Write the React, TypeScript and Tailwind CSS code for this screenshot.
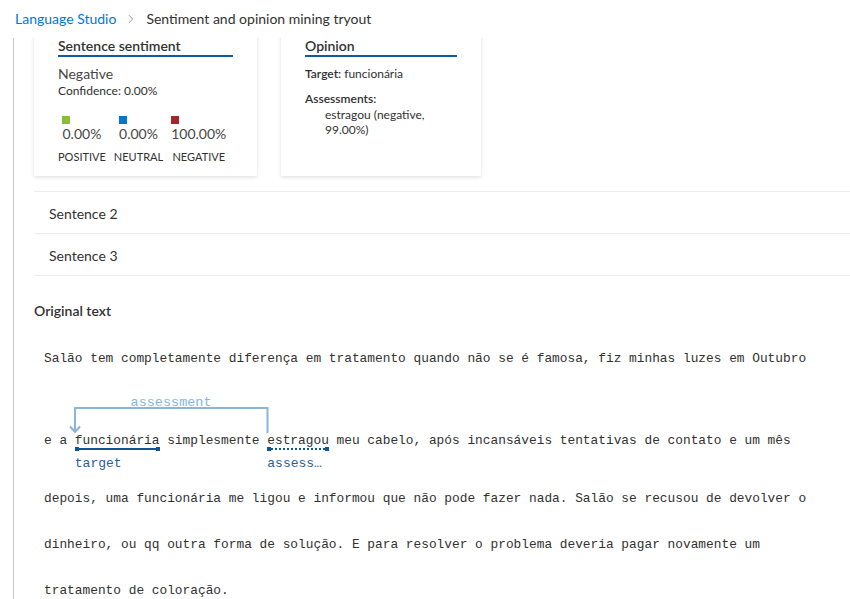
import { ChevronRight } from 'lucide-react';

const ui = "font-['Lato','Noto_Sans',sans-serif]";
const mono = "font-['Liberation_Mono','DejaVu_Sans_Mono',monospace]";

const scores = [
  { color: 'bg-[#8cbd3a]', value: '0.00%', label: 'POSITIVE' },
  { color: 'bg-[#0078d4]', value: '0.00%', label: 'NEUTRAL' },
  { color: 'bg-[#a4262c]', value: '100.00%', label: 'NEGATIVE' },
];

const lines = [
  'depois, uma funcionária me ligou e informou que não pode fazer nada. Salão se recusou de devolver o',
  'dinheiro, ou qq outra forma de solução. E para resolver o problema deveria pagar novamente um',
  'tratamento de coloração.',
];

function CardTitle({ children }: { children: string }) {
  return (
    <div className="border-b-2 border-[#0f5b9e] text-sm font-semibold leading-[19px] text-[#323130]">
      {children}
    </div>
  );
}

// one monospace char is 7.7px wide; offsets below are char counts * 7.7
function AnnotatedLine() {
  return (
    <div className="relative whitespace-pre pt-[36px] pb-[12px] leading-[46px]">
      <div className="absolute left-[30.8px] top-[14px] w-[192.5px] text-center text-[13.5px] leading-[14px] text-[#8ab4d8]">
        assessment
      </div>
      {/* bracket from assessment to target */}
      <svg
        className="absolute left-[24.8px] top-[24px]"
        width="206"
        height="28"
        viewBox="0 0 206 28"
        fill="none"
        stroke="#8ab4d8"
        strokeWidth="2"
      >
        <path d="M6 26 V2 H198.5 V27" />
        <path d="M1 20.5 L6 26 L11 20.5" />
      </svg>

      {/* target underline */}
      <div className="absolute left-[30.8px] top-[66px] h-[2px] w-[84.7px] bg-[#0f5697]" />
      <div className="absolute left-[30.8px] top-[65px] h-1 w-1 bg-[#0f5697]" />
      <div className="absolute left-[111.5px] top-[65px] h-1 w-1 bg-[#0f5697]" />
      <div className="absolute left-[30.8px] top-[74px] text-[13px] leading-4 text-[#1f5f9f]">target</div>

      {/* assessment underline */}
      <div className="absolute left-[223.3px] top-[66px] w-[61.6px] border-t-2 border-dotted border-[#0f5697]" />
      <div className="absolute left-[223.3px] top-[65px] h-1 w-1 bg-[#0f5697]" />
      <div className="absolute left-[280.9px] top-[65px] h-1 w-1 bg-[#0f5697]" />
      <div className="absolute left-[223.3px] top-[74px] w-[61.6px] truncate text-[13px] leading-4 text-[#1f5f9f]">
        assessment
      </div>

      e a funcionária simplesmente estragou meu cabelo, após incansáveis tentativas de contato e um mês
    </div>
  );
}

export default function App() {
  return (
    <div className={`flex h-[599px] w-[850px] flex-col overflow-hidden bg-white ${ui} text-[#323130]`}>
      <div className="flex h-[38px] shrink-0 items-center pl-[15px] text-sm">
        <span className="text-[#0078d4]">Language Studio</span>
        <ChevronRight size={14} strokeWidth={1.5} className="mx-[8px] text-[#8a8886]" />
        <span>Sentiment and opinion mining tryout</span>
      </div>

      <div className="ml-[13px] flex-1 overflow-hidden border-l border-[#c8c6c4] pl-5">
        <div className="-mt-[10px] flex gap-6">
          <div className="w-[223px] bg-white px-6 pt-2 pb-[11px] shadow-[0_1.6px_3.6px_rgba(0,0,0,0.13),0_0.3px_0.9px_rgba(0,0,0,0.11)]">
            <CardTitle>Sentence sentiment</CardTitle>
            <div className="mt-2 text-sm leading-[18px] text-[#484644]">Negative</div>
            <div className="text-xs leading-4">Confidence: 0.00%</div>
            <div className="mt-[17px] flex gap-[8px]">
              {scores.map((s) => (
                <div key={s.label} className="flex flex-col items-center">
                  <div>
                    <div className={`h-2 w-2 ${s.color}`} />
                    <div className="mt-[1px] text-sm leading-[18px] text-[#484644]">{s.value}</div>
                  </div>
                  <div className="mt-[6px] text-[11px] leading-4">{s.label}</div>
                </div>
              ))}
            </div>
          </div>

          <div className="w-[200px] bg-white px-6 pt-2 shadow-[0_1.6px_3.6px_rgba(0,0,0,0.13),0_0.3px_0.9px_rgba(0,0,0,0.11)]">
            <CardTitle>Opinion</CardTitle>
            <div className="mt-[9px] text-xs leading-4">
              <span className="font-semibold">Target:</span> funcionária
            </div>
            <div className="mt-[9px] text-xs font-semibold leading-4">Assessments:</div>
            <div className="pl-5 text-xs leading-[15px]">estragou (negative, 99.00%)</div>
          </div>
        </div>

        <div className="mt-[15px] border-t border-[#edebe9]">
          {['Sentence 2', 'Sentence 3'].map((s) => (
            <div key={s} className="flex h-[42px] items-center border-b border-[#edebe9] pl-[15px] pt-[2px] text-sm">
              {s}
            </div>
          ))}
        </div>

        <div className="mt-[25px] text-sm font-semibold leading-5">Original text</div>

        <div className={`mt-[15px] pl-[10px] ${mono} text-[12.83px] text-[#323130]`}>
          <div className="whitespace-pre leading-[46px]">
            Salão tem completamente diferença em tratamento quando não se é famosa, fiz minhas luzes em Outubro
          </div>
          <AnnotatedLine />
          {lines.map((l) => (
            <div key={l} className="whitespace-pre leading-[46px]">
              {l}
            </div>
          ))}
        </div>
      </div>
    </div>
  );
}
